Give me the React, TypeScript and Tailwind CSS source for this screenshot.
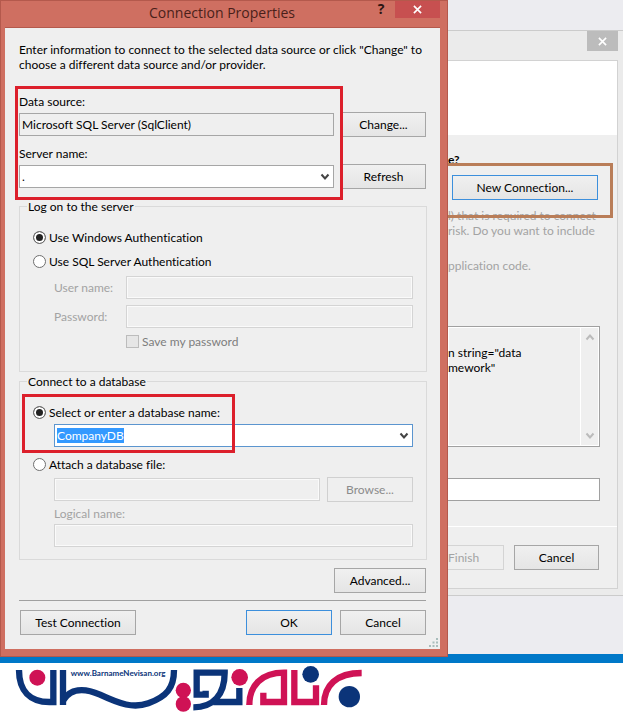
import type { ReactNode } from 'react'
import clsx from 'clsx'

interface ButtonProps {
  children: ReactNode
  className?: string
  primary?: boolean
  disabled?: boolean
}

function DialogButton({ children, className, primary, disabled }: ButtonProps) {
  return (
    <button
      type="button"
      disabled={disabled}
      className={clsx(
        'h-[25px] shrink-0 border text-center whitespace-nowrap',
        disabled
          ? 'border-[#d0d0d0] bg-[#efefef] text-[#8b8b8b]'
          : 'bg-linear-to-b from-[#f0f0f0] to-[#e5e5e5] text-black',
        !disabled && (primary ? 'border-[#3c8fdc]' : 'border-[#a6a6a6]'),
        className,
      )}
    >
      {children}
    </button>
  )
}

function Chevron({ className }: { className?: string }) {
  return (
    <svg viewBox="0 0 10 8" className={clsx('h-2 w-[10px] shrink-0', className)} fill="none" stroke="currentColor" strokeWidth="2">
      <path d="M1.5 1.5 L5 5.5 L8.5 1.5" />
    </svg>
  )
}

function CloseIcon() {
  return (
    <svg viewBox="0 0 10 10" className="mx-auto h-[9px] w-[9px]" stroke="#fff" strokeWidth="1.8">
      <path d="M1 1 L9 9 M9 1 L1 9" />
    </svg>
  )
}

function DisabledInput({ id, className }: { id: string; className?: string }) {
  return (
    <input
      id={id}
      disabled
      className={clsx('h-[23px] min-w-0 flex-1 border border-[#d4d4d4] bg-[#efefef] px-1 inset-ring inset-ring-[#fafafa]', className)}
    />
  )
}

interface RadioProps {
  name: string
  label: string
  checked?: boolean
}

function Radio({ name, label, checked }: RadioProps) {
  return (
    <label className="flex h-[15px] items-center gap-[3px]">
      <input
        type="radio"
        name={name}
        defaultChecked={checked}
        className="h-[13px] w-[13px] shrink-0 appearance-none rounded-full border border-[#6f6f6f] bg-white checked:bg-[#222] checked:inset-ring-2 checked:inset-ring-white"
      />
      {label}
    </label>
  )
}

function TitleBar() {
  return (
    <header className="flex h-[27px] items-start">
      <h1 className="min-w-0 flex-1 pt-[2px] pl-[72px] text-center font-['Open_Sans',sans-serif] text-[14px] leading-[22px] text-[#4a1f1a]">
        Connection Properties
      </h1>
      <button type="button" aria-label="Help" className="h-[18px] w-[28px] font-['Open_Sans',sans-serif] text-[14px] leading-[18px] font-bold text-[#2c1512]">
        ?
      </button>
      <button type="button" aria-label="Close" className="h-[18px] w-[45px] bg-[#c75050]">
        <CloseIcon />
      </button>
    </header>
  )
}

function SourceSection() {
  return (
    <section className="relative mt-[22px] flex flex-col">
      <label htmlFor="source">Data source:</label>
      <div className="mt-[3px] flex items-center gap-[7px]">
        <input
          id="source"
          readOnly
          value="Microsoft SQL Server (SqlClient)"
          className="h-[23px] min-w-0 flex-1 border border-[#a6a6a6] bg-[#efefef] px-[2px]"
        />
        <DialogButton className="w-[85px]">Change...</DialogButton>
      </div>
      <label htmlFor="server" className="mt-[9px]">Server name:</label>
      <div className="mt-[3px] flex items-center gap-[7px]">
        <div className="relative flex h-[23px] min-w-0 flex-1 items-center border border-[#a6a6a6] bg-white">
          <select id="server" className="h-full w-full appearance-none px-[2px]">
            <option>.</option>
          </select>
          <Chevron className="pointer-events-none absolute right-[3px] text-[#444]" />
        </div>
        <DialogButton className="w-[85px]">Refresh</DialogButton>
      </div>
      <div className="pointer-events-none absolute -top-2 right-[83px] -bottom-[11px] -left-1 border-3 border-[#dc1f2b]" />
    </section>
  )
}

function LogonSection() {
  return (
    <fieldset className="mt-[10px] -mr-px h-[173px] border border-[#dadada] px-[13px]">
      <legend className="-ml-[6px] px-[1px]">Log on to the server</legend>
      <div className="mt-4 flex flex-col gap-[9px]">
        <Radio name="auth" label="Use Windows Authentication" checked />
        <Radio name="auth" label="Use SQL Server Authentication" />
      </div>
      <div className="mt-[7px] flex items-center pl-[21px] text-[#a3a3a3]">
        <label htmlFor="user" className="w-[72px]">User name:</label>
        <DisabledInput id="user" />
      </div>
      <div className="mt-[6px] flex items-center pl-[21px] text-[#a3a3a3]">
        <label htmlFor="password" className="w-[72px]">Password:</label>
        <DisabledInput id="password" />
      </div>
      <label className="mt-[6px] flex items-center gap-[3px] pl-[93px] text-[#7d7d7d]">
        <input type="checkbox" disabled className="h-[13px] w-[13px] appearance-none border border-[#bcbcbc] bg-[#e6e6e6]" />
        Save my password
      </label>
    </fieldset>
  )
}

function DatabaseSection() {
  return (
    <fieldset className="relative mt-[2px] -mr-px h-[186px] border border-[#dadada] px-[13px]">
      <legend className="-ml-[6px] px-[1px]">Connect to a database</legend>
      <div className="mt-4">
        <Radio name="database" label="Select or enter a database name:" checked />
      </div>
      <div className="mt-1 ml-[21px] flex h-[23px] items-center justify-between border border-[#5b95cf] bg-white pr-[3px] pl-[2px]">
        <select aria-label="Database name" className="field-sizing-content h-[15px] appearance-none bg-[#3399ff] text-white">
          <option>CompanyDB</option>
        </select>
        <Chevron className="text-[#444]" />
      </div>
      <div className="mt-[10px]">
        <Radio name="database" label="Attach a database file:" />
      </div>
      <div className="mt-[5px] flex items-center gap-[7px] pl-[21px]">
        <DisabledInput id="file" />
        <DialogButton disabled className="w-[86px]">Browse...</DialogButton>
      </div>
      <div className="mt-1 flex flex-col gap-[3px] pl-[21px] text-[#a3a3a3]">
        <label htmlFor="logical">Logical name:</label>
        <DisabledInput id="logical" className="flex-none" />
      </div>
      <div className="pointer-events-none absolute top-[5px] left-[2px] h-[59px] w-[213px] border-3 border-[#dc1f2b]" />
    </fieldset>
  )
}

function ConnectionDialog() {
  return (
    <div className="z-10 border-r-8 border-b-8 border-l-5 border-[#cf6f61] bg-[#cf6f61] outline -outline-offset-1 outline-[#b4594c]">
      <TitleBar />
      <main className="relative border-t border-[#b4594c] bg-[#efefef] px-[14px] pt-[14px] pb-[14px]">
        <p>
          Enter information to connect to the selected data source or click "Change" to
          choose a different data source and/or provider.
        </p>
        <SourceSection />
        <LogonSection />
        <DatabaseSection />
        <div className="mt-2 flex justify-end">
          <DialogButton className="w-[92px]">Advanced...</DialogButton>
        </div>
        <hr className="mt-[7px] border-t border-[#a0a0a0]" />
        <div className="mt-[9px] flex gap-2 pl-px">
          <DialogButton className="w-[116px]">Test Connection</DialogButton>
          <DialogButton primary className="ml-auto w-[86px]">OK</DialogButton>
          <DialogButton className="w-[86px]">Cancel</DialogButton>
        </div>
        <svg viewBox="0 0 9 9" className="absolute right-[2px] bottom-[2px] h-[9px] w-[9px]" fill="#a9bdbb">
          <path d="M7 0h2v2h-2z M7 3.5h2v2h-2z M3.5 3.5h2v2h-2z M7 7h2v2h-2z M3.5 7h2v2h-2z M0 7h2v2h-2z" />
        </svg>
      </main>
    </div>
  )
}

function WizardWindow() {
  return (
    <div className="flex min-w-0 flex-col pt-[30px]">
      <div className="border-y border-[#cbcbcb] bg-[#ebebeb] pr-[5px] pb-[6px]">
        <div className="flex h-[29px] justify-end">
          <button type="button" aria-label="Close wizard" className="h-5 w-[31px] bg-[#bcbcbc]">
            <CloseIcon />
          </button>
        </div>
        <div className="border-y border-r border-[#d2d2d2] bg-[#efefef]">
          <div className="h-[74px] bg-white" />
          <div className="relative pt-[17px] pr-[17px]">
            <p className="font-bold">e?</p>
            <DialogButton primary className="mt-2 ml-1 block w-[146px]">New Connection...</DialogButton>
            <div className="mt-2 whitespace-nowrap text-[#a3a3a3]">
              <p>l) that is required to connect</p>
              <p>risk. Do you want to include</p>
              <p className="mt-5">pplication code.</p>
            </div>
            <div className="pointer-events-none absolute top-[28px] right-1 -left-[9px] h-[55px] border-3 border-[#b97d58]" />
          </div>
          <div className="mt-[53px] mr-[17px] flex h-[121px] border-y border-r border-[#a0a0a0] inset-ring inset-ring-white">
            <div className="min-w-0 flex-1 pt-[18px] whitespace-nowrap">
              <p>n string="data</p>
              <p>mework"</p>
            </div>
            <div className="flex w-[19px] flex-col items-center justify-between border-l border-white py-[6px] text-[#bbb]">
              <Chevron className="rotate-180" />
              <Chevron />
            </div>
          </div>
          <div className="mt-[31px] mr-[17px] flex">
            <input aria-label="Entity settings name" className="h-[23px] w-full border-y border-r border-[#a0a0a0] bg-white" />
          </div>
          <hr className="mt-[25px] border-t border-white" />
          <div className="mt-[18px] mb-[18px] flex justify-between gap-[10px] pr-[18px]">
            <button type="button" disabled className="h-[25px] min-w-0 flex-1 border-y border-r border-[#d4d4d4] text-left text-[#a3a3a3]">
              Finish
            </button>
            <DialogButton className="w-[85px]">Cancel</DialogButton>
          </div>
        </div>
      </div>
    </div>
  )
}

function Logo() {
  return (
    <svg viewBox="0 9 1140 150" className="block h-[50px] w-[380px]" fill="none" strokeWidth="19" role="img" aria-label="BarnameNevisan">
      <g stroke="#0b3479">
        <path d="M57 30 C57 92 90 126 148 126 H160 V30" />
        <path d="M189 30 V135" />
        <path d="M189 122 C210 86 250 82 300 104 C360 132 400 146 445 130 C500 110 522 84 522 30" />
        <path d="M617 92 V104 H590 V38 H674 C674 104 640 142 580 142" />
        <path d="M640 126 H718 V84" />
      </g>
      <g stroke="#cf1255">
        <path d="M748 135 C748 76 785 38 852 38 V126 H790 V98" />
        <path d="M883 30 V126 H948 V76" />
        <path d="M972 135 C972 76 1010 39 1085 39" />
      </g>
      <g fill="#cf1255">
        <circle cx="112" cy="53" r="24" />
        <circle cx="550" cy="91" r="23" />
        <circle cx="550" cy="132" r="23" />
        <circle cx="719" cy="52" r="25" />
      </g>
      <g fill="#0b3479">
        <circle cx="932" cy="43" r="25" />
        <circle cx="1048" cy="110" r="32" />
        <text x="212" y="49" fontSize="24" className="font-['Lato',sans-serif] font-bold" stroke="none">
          www.BarnameNevisan.org
        </text>
      </g>
    </svg>
  )
}

export default function App() {
  return (
    <div className="min-h-screen overflow-hidden bg-white font-['Lato','Open_Sans',sans-serif] text-[12px] leading-[15px] text-black [font-variant-ligatures:none]">
      <div className="grid grid-cols-[448fr_175fr] bg-[#ececf0]">
        <ConnectionDialog />
        <WizardWindow />
      </div>
      <div className="-mt-[3px] h-[9px] bg-[#0078c8]" />
      <footer>
        <Logo />
      </footer>
    </div>
  )
}
